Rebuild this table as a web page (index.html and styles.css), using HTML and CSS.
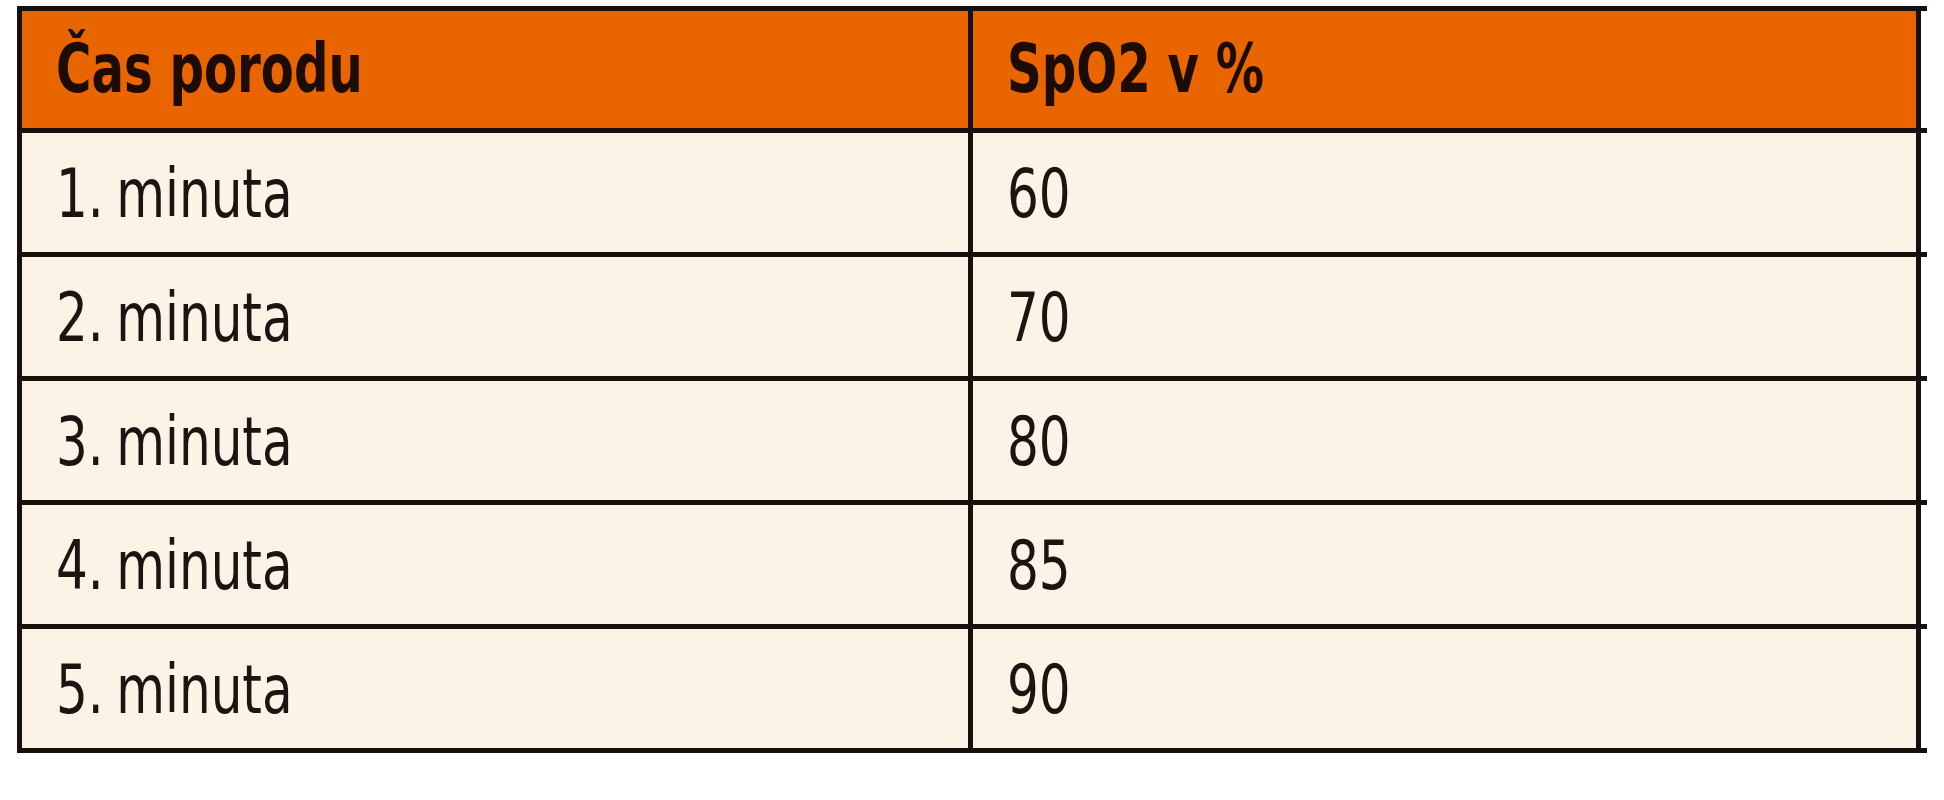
FILE: index.html
```html
<!DOCTYPE html>
<html lang="cs">
<head>
<meta charset="utf-8">
<title>SpO2</title>
<link rel="stylesheet" href="styles.css">
</head>
<body>
<div class="table">
  <div class="row head">
    <div class="cell c1"><span class="txt">Čas porodu</span></div>
    <div class="cell c2"><span class="txt">SpO2 v %</span></div>
    <div class="tail"></div>
  </div>
  <div class="row">
    <div class="cell c1"><span class="txt">1. minuta</span></div>
    <div class="cell c2"><span class="txt">60</span></div>
    <div class="tail"></div>
  </div>
  <div class="row">
    <div class="cell c1"><span class="txt">2. minuta</span></div>
    <div class="cell c2"><span class="txt">70</span></div>
    <div class="tail"></div>
  </div>
  <div class="row">
    <div class="cell c1"><span class="txt">3. minuta</span></div>
    <div class="cell c2"><span class="txt">80</span></div>
    <div class="tail"></div>
  </div>
  <div class="row">
    <div class="cell c1"><span class="txt">4. minuta</span></div>
    <div class="cell c2"><span class="txt">85</span></div>
    <div class="tail"></div>
  </div>
  <div class="row">
    <div class="cell c1"><span class="txt">5. minuta</span></div>
    <div class="cell c2"><span class="txt">90</span></div>
    <div class="tail"></div>
  </div>
</div>
</body>
</html>
```

FILE: styles.css
```css
html, body {
  margin: 0;
  padding: 0;
  background: #ffffff;
}

body {
  font-family: "DejaVu Sans Condensed", "DejaVu Sans", "Liberation Sans", sans-serif;
  font-stretch: condensed;
  color: #1b1512;
}

.table {
  margin: 6px 0 0 17px;
  width: 1910px;
  border-top: 5px solid #17100d;
}

.row {
  display: grid;
  grid-template-columns: 951px 953px 6px;
  height: 124px;
  border-bottom: 5px solid #17100d;
  box-sizing: border-box;
}

.row.head {
  height: 122px;
}

.cell {
  display: flex;
  align-items: center;
  padding: 3px 0 0 34px;
  font-size: 67px;
  background: #fdf2e6;
  border-left: 5px solid #17100d;
  box-sizing: border-box;
  white-space: nowrap;
}

.txt {
  display: inline-block;
  transform: scaleX(0.83);
  transform-origin: left center;
  word-spacing: -4px;
}

.cell.c2 {
  border-right: 5px solid #17100d;
}

.head .cell {
  background: #e96500;
  font-weight: bold;
  color: #1c0c04;
  padding: 0 0 2px 34px;
}

.head .txt {
  transform: scaleX(0.8);
  word-spacing: normal;
}

.tail {
  background: #ffffff;
}
```
